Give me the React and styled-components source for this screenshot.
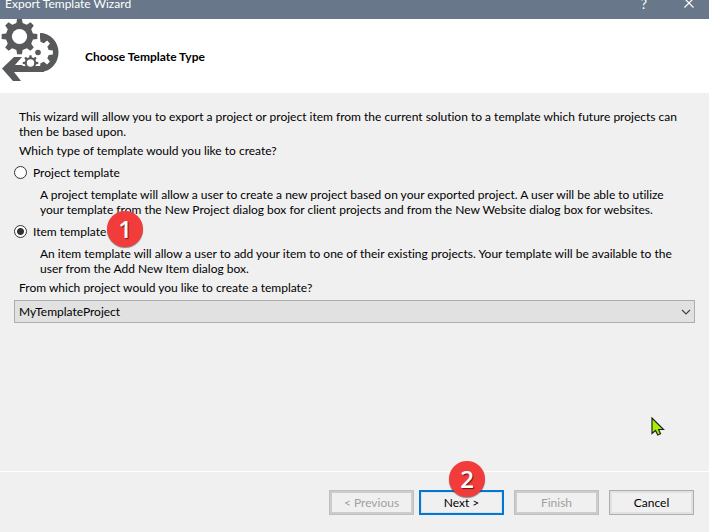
import React from "react";
import styled, { createGlobalStyle } from "styled-components";

const GlobalStyle = createGlobalStyle`
  * { box-sizing: border-box; }
  body { margin: 0; background: #f0f0f0; }
`;

const Dialog = styled.main`
  min-height: 100vh;
  display: flex;
  flex-direction: column;
  background: #f0f0f0;
  color: #000;
  font: 12px/15px Lato, "Segoe UI", sans-serif;
  font-variant-ligatures: none;
`;

const TitleBar = styled.div`
  height: 19px;
  display: flex;
  align-items: flex-end;
  justify-content: space-between;
  padding: 0 12px 8px 5px;
  overflow: hidden;
  background: #687789;
  color: #fff;
`;

const Caption = styled.span`
  white-space: nowrap;
`;

const CaptionButtons = styled.div`
  display: flex;
  align-items: flex-end;
  gap: 34px;
`;

const CaptionButton = styled.button`
  display: flex;
  padding: 0;
  border: 0;
  background: none;
  color: inherit;
  font: inherit;
  font-size: 14px;
`;

const Header = styled.header`
  min-height: 74px;
  display: flex;
  align-items: flex-start;
  gap: 25px;
  background: #fff;
`;

const Heading = styled.h1`
  margin: 30px 0 0;
  font-size: 12px;
  line-height: 15px;
  font-weight: 700;
`;

const Content = styled.section`
  flex: 1;
  display: flex;
  flex-direction: column;
  padding: 16px 14px 0;
`;

const Text = styled.p`
  margin: 0 0 4px;
  padding-left: 5px;
`;

const Options = styled.fieldset`
  margin: 0;
  padding: 0;
  border: 0;
`;

const Legend = styled.legend`
  padding: 0 0 7px 5px;
`;

const Option = styled.label`
  position: relative;
  width: fit-content;
  display: flex;
  align-items: center;
  gap: 6px;
`;

const Radio = styled.input`
  appearance: none;
  width: 13px;
  height: 13px;
  margin: 0;
  border: 1px solid #333;
  border-radius: 50%;
  background: #fff;

  &:checked {
    background: radial-gradient(circle, #333 0 3px, #fff 4px);
  }
`;

const Description = styled.p`
  margin: 0;
  padding: 7px 8px 7px 26px;
`;

const LastDescription = styled(Description)`
  padding-bottom: 4px;
`;

const ProjectLabel = styled.label`
  padding: 0 0 5px 5px;
`;

const SelectBox = styled.div`
  display: grid;
  align-items: center;

  > * { grid-area: 1 / 1; }
  > svg {
    justify-self: end;
    margin-right: 4px;
    pointer-events: none;
  }
`;

const Select = styled.select`
  appearance: none;
  width: 100%;
  height: 23px;
  padding: 0 24px 0 4px;
  border: 1px solid #adadad;
  border-radius: 0;
  background: #e1e1e1;
  color: inherit;
  font: inherit;
`;

const Footer = styled.footer`
  display: flex;
  justify-content: flex-end;
  gap: 10px;
  padding: 18px 15px 17px;
  border-top: 1px solid #fff;
`;

const StepButtons = styled.div`
  display: flex;
  gap: 5px;
`;

const BUTTON_LOOKS = {
  normal: ["1px solid #adadad", "#e1e1e1"],
  primary: ["2px solid #0078d7", "#e1e1e1"],
  disabled: ["1px solid #bfbfbf", "#cccccc"],
};

const Button = styled.button`
  position: relative;
  width: 85px;
  height: 25px;
  padding: 0;
  border: ${(p) => BUTTON_LOOKS[p.$look][0]};
  box-shadow: inset 0 0 0 ${(p) => (p.$look === "primary" ? 1 : 2)}px ${(p) => BUTTON_LOOKS[p.$look][1]};
  background: #f0f0f0;
  color: ${(p) => (p.$look === "disabled" ? "#a0a0a0" : "#000")};
  font: inherit;
`;

const Badge = styled.span`
  position: absolute;
  left: ${(p) => p.$left};
  bottom: ${(p) => p.$bottom};
  width: 36px;
  height: 36px;
  border-radius: 50%;
  background: #f23c3c;
  box-shadow: 0 1px 1px rgba(0, 0, 0, 0.45);
  color: #fff;
  font: 600 24px/35px "Open Sans", sans-serif;
  text-align: center;
  text-shadow: 1px 1px 1px rgba(0, 0, 0, 0.6);
`;

const Pointer = styled.svg`
  position: fixed;
  right: 44px;
  bottom: 95px;
  pointer-events: none;
`;

function gear(cx, cy, outer, inner, teeth = 8) {
  const step = (Math.PI * 2) / teeth;
  const at = (r, a) => `${(cx + r * Math.cos(a)).toFixed(2)} ${(cy + r * Math.sin(a)).toFixed(2)}`;
  const points = [];
  for (let i = 0; i < teeth; i += 1) {
    const a = i * step;
    points.push(
      at(inner, a - step * 0.29),
      at(outer, a - step * 0.17),
      at(outer, a + step * 0.17),
      at(inner, a + step * 0.29)
    );
  }
  return `M${points.join("L")}Z`;
}

function WizardIcon() {
  return (
    <svg width="60" height="62" viewBox="0 0 60 62" aria-hidden="true">
      <g fill="#58595b">
        <path d="M40 14A18.5 19.5 0 0 1 40 53H14L21 62H13L2 49.5L14 38H22L15 46H40Z" />
        <path d={gear(38, 33.5, 15, 11)} fill="#fff" />
        <path d="M36 47H44V53H36Z" />
        <circle cx="38" cy="33.5" r="2.8" />
        <circle cx="30.5" cy="44" r="8.5" fill="#fff" />
        <path d="M14 47H40V53H14Z" />
        <path d={gear(30.5, 44, 7.8, 5.8)} />
        <circle cx="30.5" cy="44" r="3.7" fill="#fff" />
        <path d={gear(19.5, 17.5, 18, 13.8)} />
        <circle cx="19.5" cy="17.5" r="7.6" fill="#fff" />
      </g>
    </svg>
  );
}

export default function App() {
  return (
    <Dialog>
      <GlobalStyle />
      <TitleBar>
        <Caption>Export Template Wizard</Caption>
        <CaptionButtons>
          <CaptionButton aria-label="Help">?</CaptionButton>
          <CaptionButton aria-label="Close">
            <svg width="16" height="14" viewBox="0 0 16 14" fill="none" stroke="currentColor">
              <path d="M3.5 1.5L12.5 10.5M12.5 1.5L3.5 10.5" strokeWidth="1.2" />
            </svg>
          </CaptionButton>
        </CaptionButtons>
      </TitleBar>
      <Header>
        <WizardIcon />
        <Heading>Choose Template Type</Heading>
      </Header>
      <Content>
        <Text>
          This wizard will allow you to export a project or project item from the current solution to a
          template which future projects can then be based upon.
        </Text>
        <Options>
          <Legend>Which type of template would you like to create?</Legend>
          <Option>
            <Radio type="radio" name="kind" />
            Project template
          </Option>
          <Description>
            A project template will allow a user to create a new project based on your exported project. A
            user will be able to utilize your template from the New Project dialog box for client projects
            and from the New Website dialog box for websites.
          </Description>
          <Option>
            <Radio type="radio" name="kind" defaultChecked />
            Item template
            <Badge $left="93px" $bottom="-8px">1</Badge>
          </Option>
          <LastDescription>
            An item template will allow a user to add your item to one of their existing projects. Your
            template will be available to the user from the Add New Item dialog box.
          </LastDescription>
        </Options>
        <ProjectLabel htmlFor="project">
          From which project would you like to create a template?
        </ProjectLabel>
        <SelectBox>
          <Select id="project">
            <option>MyTemplateProject</option>
          </Select>
          <svg width="10" height="6" viewBox="0 0 10 6" fill="none" stroke="#444" aria-hidden="true">
            <path d="M1 1L5 5L9 1" strokeWidth="1.2" />
          </svg>
        </SelectBox>
      </Content>
      <Footer>
        <StepButtons>
          <Button $look="disabled" disabled>&lt; Previous</Button>
          <Button $look="primary">
            Next &gt;
            <Badge $left="28px" $bottom="16px">2</Badge>
          </Button>
        </StepButtons>
        <Button $look="disabled" disabled>Finish</Button>
        <Button $look="normal">Cancel</Button>
      </Footer>
      <Pointer width="14" height="20" viewBox="0 0 14 20" aria-hidden="true">
        <path
          d="M1 1V16.5L4.5 13.5L6.8 18L9.5 16.8L7.6 12.5H12.5Z"
          fill="#a6f000"
          stroke="#222"
          strokeWidth="1.2"
        />
      </Pointer>
    </Dialog>
  );
}
